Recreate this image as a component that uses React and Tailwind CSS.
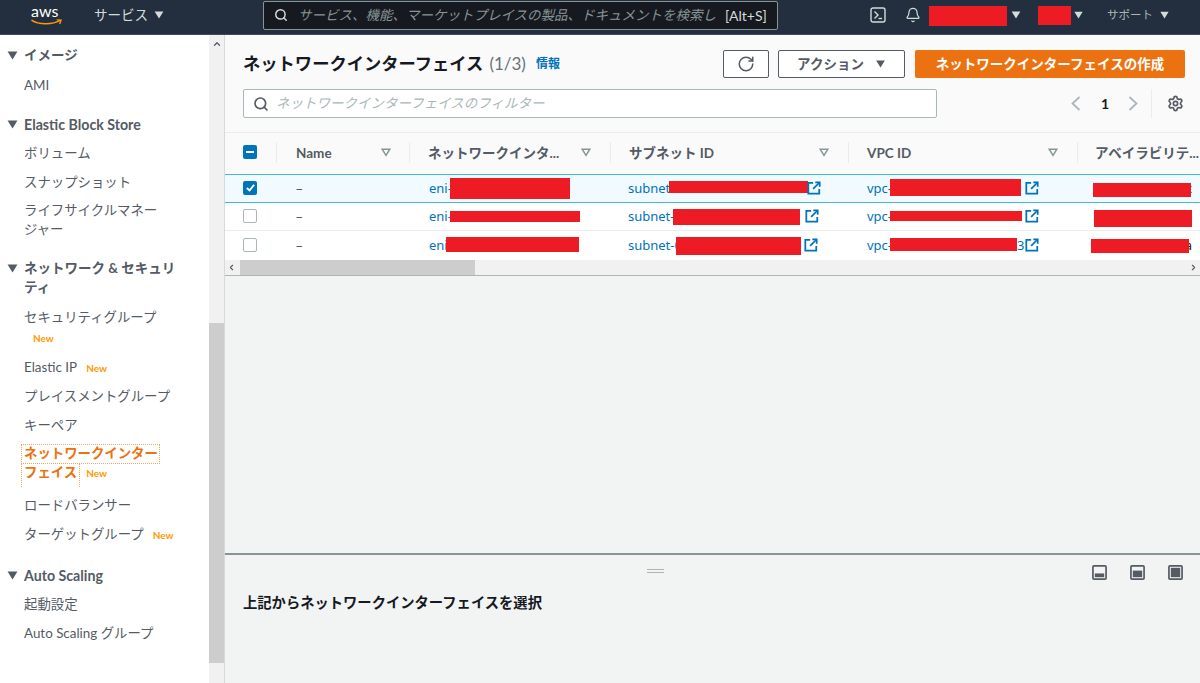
import React from "react";
import { RotateCw, Settings, ChevronLeft, ChevronRight, Search, Bell, ChevronUp } from "lucide-react";

const FONT = { fontFamily: 'Lato,"Noto Sans CJK JP",sans-serif' };

const Tri = ({ className = "" }) => (
  <svg viewBox="0 0 12 10" className={className}><path d="M0.5 0.5H11.5L6 9.5Z" fill="currentColor" /></svg>
);
const FilterTri = () => (
  <svg viewBox="0 0 12 10" className="w-[10px] h-[9px] text-[#879596]"><path d="M1.5 1.2H10.5L6 8.5Z" fill="none" stroke="currentColor" strokeWidth="1.8" /></svg>
);
const Ext = () => (
  <svg viewBox="0 0 16 16" className="w-[14px] h-[14px] text-[#0073bb] shrink-0" fill="none" stroke="currentColor" strokeWidth="2">
    <path d="M7 2H1.5V14.5H14V9" /><path d="M9.5 1.5H14.5V6.5" /><path d="M14 2L7 9" />
  </svg>
);
const Red = ({ className }) => <div className={`absolute bg-[#ed1c24] ${className}`} />;

const Check = ({ state }) => {
  if (state === "on")
    return (
      <div className="w-[14px] h-[14px] rounded-[2px] bg-[#0073bb] flex items-center justify-center">
        <svg viewBox="0 0 12 12" className="w-[11px] h-[11px]" fill="none" stroke="#fff" strokeWidth="2"><path d="M2 6.5L5 9.2L10 3" /></svg>
      </div>
    );
  if (state === "mixed")
    return (
      <div className="w-[14px] h-[14px] rounded-[2px] bg-[#0073bb] flex items-center justify-center">
        <div className="w-[8px] h-[2px] bg-white" />
      </div>
    );
  return <div className="w-[14px] h-[14px] rounded-[2px] border border-[#aab7b8] bg-white" />;
};

const New = ({ className = "" }) => <span className={`text-[#ff9900] text-[10px] font-bold leading-none ${className}`}>New</span>;

const SideHead = ({ children, className = "" }) => (
  <div className={`flex items-start pl-[7px] pr-3 font-bold text-[13.5px] leading-[19px] text-[#545b64] ${className}`}>
    <Tri className="w-[11px] h-[9px] text-[#545b64] mt-[5px] mr-[6px] shrink-0" />
    <span>{children}</span>
  </div>
);
const SideItem = ({ children, className = "" }) => (
  <div className={`pl-6 pr-4 text-[13.4px] leading-[19px] text-[#545b64] ${className}`}>{children}</div>
);

const HeadCell = ({ w, label, tri = true, sep = true, pl = "pl-[19px]", tr = "right-[19px]" }) => (
  <div className={`${w} shrink-0 h-full flex items-center ${pl} relative overflow-hidden`}>
    {sep && <div className="absolute left-0 top-[9px] bottom-[11px] w-px bg-[#eaeded]" />}
    <span className="text-[13.5px] font-bold text-[#545b64] whitespace-nowrap">{label}</span>
    {tri && <div className={`absolute ${tr} top-[15px] flex`}><FilterTri /></div>}
  </div>
);

const Row = ({ h, cls, check, eni, sub, vpc, az, redE, redS, redV, redA, extS, vpcTail, extTop = "top-[6px]" }) => (
  <div className={`flex items-center ${h} ${cls} text-[13px] font-['Noto_Sans']`}>
    <div className="w-[51px] shrink-0 pl-[18px] flex items-center -mt-[2px]"><Check state={check} /></div>
    <div className="w-[133px] shrink-0 pl-5 text-[#545b64]">–</div>
    <div className="w-[201px] shrink-0 pl-5 text-[#0073bb] relative h-full flex items-center">
      {eni}<Red className={redE} />
    </div>
    <div className="w-[238px] shrink-0 pl-[18px] text-[#0073bb] relative h-full flex items-center">
      {sub}<Red className={redS} /><div className={`absolute ${extTop} ${extS}`}><Ext /></div>
    </div>
    <div className="w-[229px] shrink-0 pl-[19px] text-[#0073bb] relative h-full flex items-center">
      {vpc}{vpcTail && <span className="absolute left-[169px]">{vpcTail}</span>}<Red className={redV} /><div className={`absolute left-[177px] ${extTop}`}><Ext /></div>
    </div>
    <div className="w-[130px] shrink-0 relative h-full flex items-center justify-end pr-[15px] text-[#16191f]">
      {az}<Red className={redA} />
    </div>
  </div>
);

const PanelIcon = ({ fill }) => (
  <svg viewBox="0 0 16 16" className="w-[15px] h-[15px] text-[#545b64]">
    <rect x="1" y="1" width="14" height="14" rx="1" fill="none" stroke="currentColor" strokeWidth="1.8" />
    <rect x="3" y={fill} width="10" height={13 - fill} fill="currentColor" />
  </svg>
);

const Chev = ({ d, className = "" }) => (
  <svg viewBox="0 0 10 15" className={`w-[10px] h-[15px] text-[#aab7b8] shrink-0 ${className}`} fill="none" stroke="currentColor" strokeWidth="1.8">
    <path d={d} />
  </svg>
);

export default function App() {
  return (
    <div style={FONT} className="w-[1200px] h-[683px] overflow-hidden flex flex-col bg-[#f2f3f3]">
      {/* Top nav */}
      <header className="h-[35px] shrink-0 bg-[#232f3e] border-b border-[#414b58] flex items-center pb-[4px] text-[#d5dbdb]">
        <div className="w-[94px] shrink-0 pl-[30px] flex flex-col items-start">
          <span className="text-[16px] leading-[14px] text-white ml-[1px] mt-[1px]">aws</span>
          <svg viewBox="0 0 34 8" className="w-[33px] h-[8px] mt-[1px]">
            <path d="M1.5 1C9 6 23 6 31 1.3" fill="none" stroke="#ff9900" strokeWidth="1.6" />
            <path d="M27.5 0.8L32 1L30.6 5" fill="none" stroke="#ff9900" strokeWidth="1.4" />
          </svg>
        </div>
        <span className="text-[13.5px] text-[#d5dbdb]">サービス</span>
        <Tri className="w-[10px] h-[8px] ml-[6px] text-[#d5dbdb]" />
        <div className="ml-[99px] w-[515px] h-[29px] border border-[#879596] rounded-[2px] bg-[#16191f] flex items-center pl-[10px]">
          <Search className="w-[14px] h-[14px] text-[#d5dbdb] shrink-0" strokeWidth={2.5} />
          <span className="ml-[10px] w-[424px] shrink-0 text-[13.5px] italic text-[#879596] whitespace-nowrap">サービス、機能、マーケットプレイスの製品、ドキュメントを検索し</span>
          <span className="ml-[3px] text-[14px] text-[#d5dbdb] whitespace-nowrap">[Alt+S]</span>
        </div>
        <svg viewBox="0 0 16 16" className="w-[16px] h-[16px] ml-[92px] text-[#d5dbdb]" fill="none" stroke="currentColor" strokeWidth="1.4">
          <rect x="1" y="1" width="14" height="14" rx="2" /><path d="M4.5 4.5L8 8L4.5 11.5" /><path d="M8.5 11.5H12" />
        </svg>
        <Bell className="w-[16px] h-[16px] ml-[19px] text-[#d5dbdb]" strokeWidth={1.8} />
        <div className="w-[78px] h-[20px] ml-[8px] mt-[2px] bg-[#ed1c24]" />
        <Tri className="w-[10px] h-[8px] ml-[4px] text-[#d5dbdb]" />
        <div className="w-[33px] h-[19px] ml-[17px] mt-[1px] bg-[#ed1c24]" />
        <Tri className="w-[9px] h-[8px] ml-[3px] text-[#d5dbdb]" />
        <span className="ml-[24px] text-[11.5px] text-[#aab7b8]">サポート</span>
        <Tri className="w-[9px] h-[8px] ml-[7px] text-[#d5dbdb]" />
      </header>

      <div className="flex flex-1 min-h-0">
        {/* Sidebar */}
        <aside className="w-[209px] shrink-0 bg-white pt-[11px]">
          <SideHead>イメージ</SideHead>
          <SideItem className="mt-[11px]">AMI</SideItem>
          <SideHead className="mt-[20px] text-[14.2px]">Elastic Block Store</SideHead>
          <SideItem className="mt-[10px]">ボリューム</SideItem>
          <SideItem className="mt-[10px]">スナップショット</SideItem>
          <SideItem className="mt-[9px]">ライフサイクルマネー<br />ジャー</SideItem>
          <SideHead className="mt-[20px]">ネットワーク & セキュリ<br />ティ</SideHead>
          <SideItem className="mt-[11px]">セキュリティグループ</SideItem>
          <New className="block ml-[33px] mt-[6px]" />
          <SideItem className="mt-[15px]">Elastic IP<New className="ml-[9px]" /></SideItem>
          <SideItem className="mt-[10px]">プレイスメントグループ</SideItem>
          <SideItem className="mt-[10px]">キーペア</SideItem>
          <div className="pl-6 pr-4 text-[13.4px] leading-[19px] font-bold text-[#ec7211] mt-[9px] relative">
            <div className="absolute left-[21px] top-0 w-[139px] h-[20px] border border-dotted border-[#f5a45f]" />
            <div className="absolute left-[21px] top-[19px] w-[59px] h-[24px] border-x border-t border-dotted border-[#f5a45f]" />
            <div>ネットワークインター</div>
            <div>フェイス<New className="ml-[9px]" /></div>
          </div>
          <SideItem className="mt-[14px]">ロードバランサー</SideItem>
          <SideItem className="mt-[10px]">ターゲットグループ<New className="ml-[9px]" /></SideItem>
          <SideHead className="mt-[22px] text-[14.2px]">Auto Scaling</SideHead>
          <SideItem className="mt-[10px]">起動設定</SideItem>
          <SideItem className="mt-[10px]">Auto Scaling グループ</SideItem>
        </aside>

        {/* Sidebar scrollbar */}
        <div className="w-[15px] shrink-0 bg-[#f1f1f1] flex flex-col">
          <div className="h-[288px] shrink-0 flex justify-center pt-[4px]">
            <ChevronUp className="w-[10px] h-[10px] text-[#545b64]" strokeWidth={3} />
          </div>
          <div className="h-[340px] w-[15px] shrink-0 bg-[#cdcdcd]" />
        </div>

        {/* Main */}
        <main className="flex-1 min-w-0 border-l border-[#d5dbdb] flex flex-col">
          <section className="bg-[#fafafa] h-[98px] shrink-0 pl-[18px] pr-[15px] pt-[15px] border-b border-[#eaeded]">
            <div className="flex items-center h-[28px]">
              <h1 className="text-[17.3px] font-bold text-[#16191f] leading-none whitespace-nowrap">ネットワークインターフェイス</h1>
              <span className="ml-[6px] text-[17px] text-[#687078]">(1/3)</span>
              <span className="ml-[10px] text-[12px] font-bold text-[#0073bb]">情報</span>
              <button className="ml-auto w-[46px] h-[28px] bg-white border border-[#545b64] rounded-[2px] flex items-center justify-center">
                <RotateCw className="w-[18px] h-[18px] text-[#545b64]" strokeWidth={2} />
              </button>
              <button className="ml-[9px] w-[127px] h-[28px] bg-white border border-[#545b64] rounded-[2px] flex items-center justify-center font-bold text-[13.5px] text-[#545b64]">
                アクション<Tri className="w-[11px] h-[8px] ml-[11px] text-[#545b64]" />
              </button>
              <button className="ml-[10px] w-[270px] h-[28px] bg-[#ec7211] rounded-[2px] text-white font-bold text-[13.5px]">ネットワークインターフェイスの作成</button>
            </div>
            <div className="flex items-center mt-[11px] h-[29px]">
              <div className="w-[694px] h-[29px] shrink-0 bg-white border border-[#aab7b8] rounded-[2px] flex items-center pl-[9px]">
                <Search className="w-[16px] h-[16px] text-[#545b64]" strokeWidth={2.5} />
                <span className="ml-[7px] text-[13.5px] italic text-[#aab7b8]">ネットワークインターフェイスのフィルター</span>
              </div>
              <Chev d="M8.5 1L1.5 7.5L8.5 14" className="ml-[134px]" />
              <span className="ml-[20px] w-[7px] text-[14px] font-bold text-[#16191f]">1</span>
              <Chev d="M1.5 1L8.5 7.5L1.5 14" className="ml-[20px]" />
              <div className="ml-[13px] h-[29px] w-px bg-[#eaeded]" />
              <Settings className="ml-[15px] w-[17px] h-[17px] text-[#545b64]" strokeWidth={2.4} />
            </div>
          </section>

          {/* Table */}
          <div className="overflow-hidden shrink-0">
            <div className="w-[1000px]">
              <div className="flex items-center h-[41px] bg-[#fafafa]">
                <div className="w-[51px] shrink-0 pl-[18px] -mt-[3px]"><Check state="mixed" /></div>
                <HeadCell w="w-[133px]" label="Name" pl="pl-5" tr="right-[18px]" />
                <HeadCell w="w-[201px]" label="ネットワークインタ..." />
                <HeadCell w="w-[238px]" label="サブネット ID" />
                <HeadCell w="w-[229px]" label="VPC ID" />
                <HeadCell w="w-[130px]" label="アベイラビリテ..." tri={false} pl="pl-[18px]" />
              </div>
              <Row h="h-[29px]" cls="bg-[#f1faff] border-y border-[#44b9d6]" check="on" eni="eni-" sub="subnet" vpc="vpc-" az="c"
                redE="left-[41px] top-[3px] w-[120px] h-[21px]" redS="left-[59px] top-[6px] w-[139px] h-[12px]" extS="left-[197px]"
                redV="left-[42px] top-[4px] w-[131px] h-[17px]" redA="left-[16px] top-[8px] w-[98px] h-[14px]" />
              <Row h="h-[28px]" cls="bg-white border-b border-[#eaeded]" check="off" eni="eni-" sub="subnet-" vpc="vpc-" az=""
                redE="left-[41px] top-[8px] w-[130px] h-[11px]" redS="left-[63px] top-[6px] w-[127px] h-[16px]" extS="left-[195px]"
                redV="left-[42px] top-[8px] w-[132px] h-[10px]" redA="left-[17px] top-[7px] w-[98px] h-[17px]" />
              <Row h="h-[29px]" cls="bg-white" check="off" eni="eni" sub="subnet-0" vpc="vpc-" az="a" vpcTail="3" extTop="top-[7px]"
                redE="left-[37px] top-[6px] w-[133px] h-[15px]" redS="left-[66px] top-[6px] w-[125px] h-[18px]" extS="left-[194px]"
                redV="left-[42px] top-[7px] w-[127px] h-[13px]" redA="left-[14px] top-[8px] w-[98px] h-[14px]" />
            </div>
          </div>

          {/* Table scrollbar */}
          <div className="h-[16px] shrink-0 bg-[#f1f1f1] border-b border-[#aab7b8] flex items-center">
            <ChevronLeft className="ml-[2px] w-[9px] h-[9px] text-[#545b64]" strokeWidth={3} />
            <div className="ml-[4px] w-[235px] h-[15px] bg-[#cdcdcd]" />
            <ChevronRight className="ml-auto mr-[2px] w-[9px] h-[9px] text-[#545b64]" strokeWidth={3} />
          </div>

          <div className="flex-1 min-h-0 bg-[#f2f3f3]" />

          {/* Split panel */}
          <section className="h-[130px] shrink-0 bg-[#f2f3f3] border-t-2 border-[#879596] relative px-[18px]">
            <div className="absolute left-[422px] top-[14px] flex flex-col gap-[2px]">
              <div className="w-[17px] h-px bg-[#aab7b8]" />
              <div className="w-[17px] h-px bg-[#aab7b8]" />
            </div>
            <div className="flex justify-end gap-[23px] pt-[10px] -mr-[1px] h-[37px]">
              <PanelIcon fill={9} />
              <PanelIcon fill={6} />
              <PanelIcon fill={3} />
            </div>
            <h2 className="text-[14.3px] font-bold text-[#16191f] leading-[20px] mt-[1px]">上記からネットワークインターフェイスを選択</h2>
          </section>
        </main>
      </div>
    </div>
  );
}
